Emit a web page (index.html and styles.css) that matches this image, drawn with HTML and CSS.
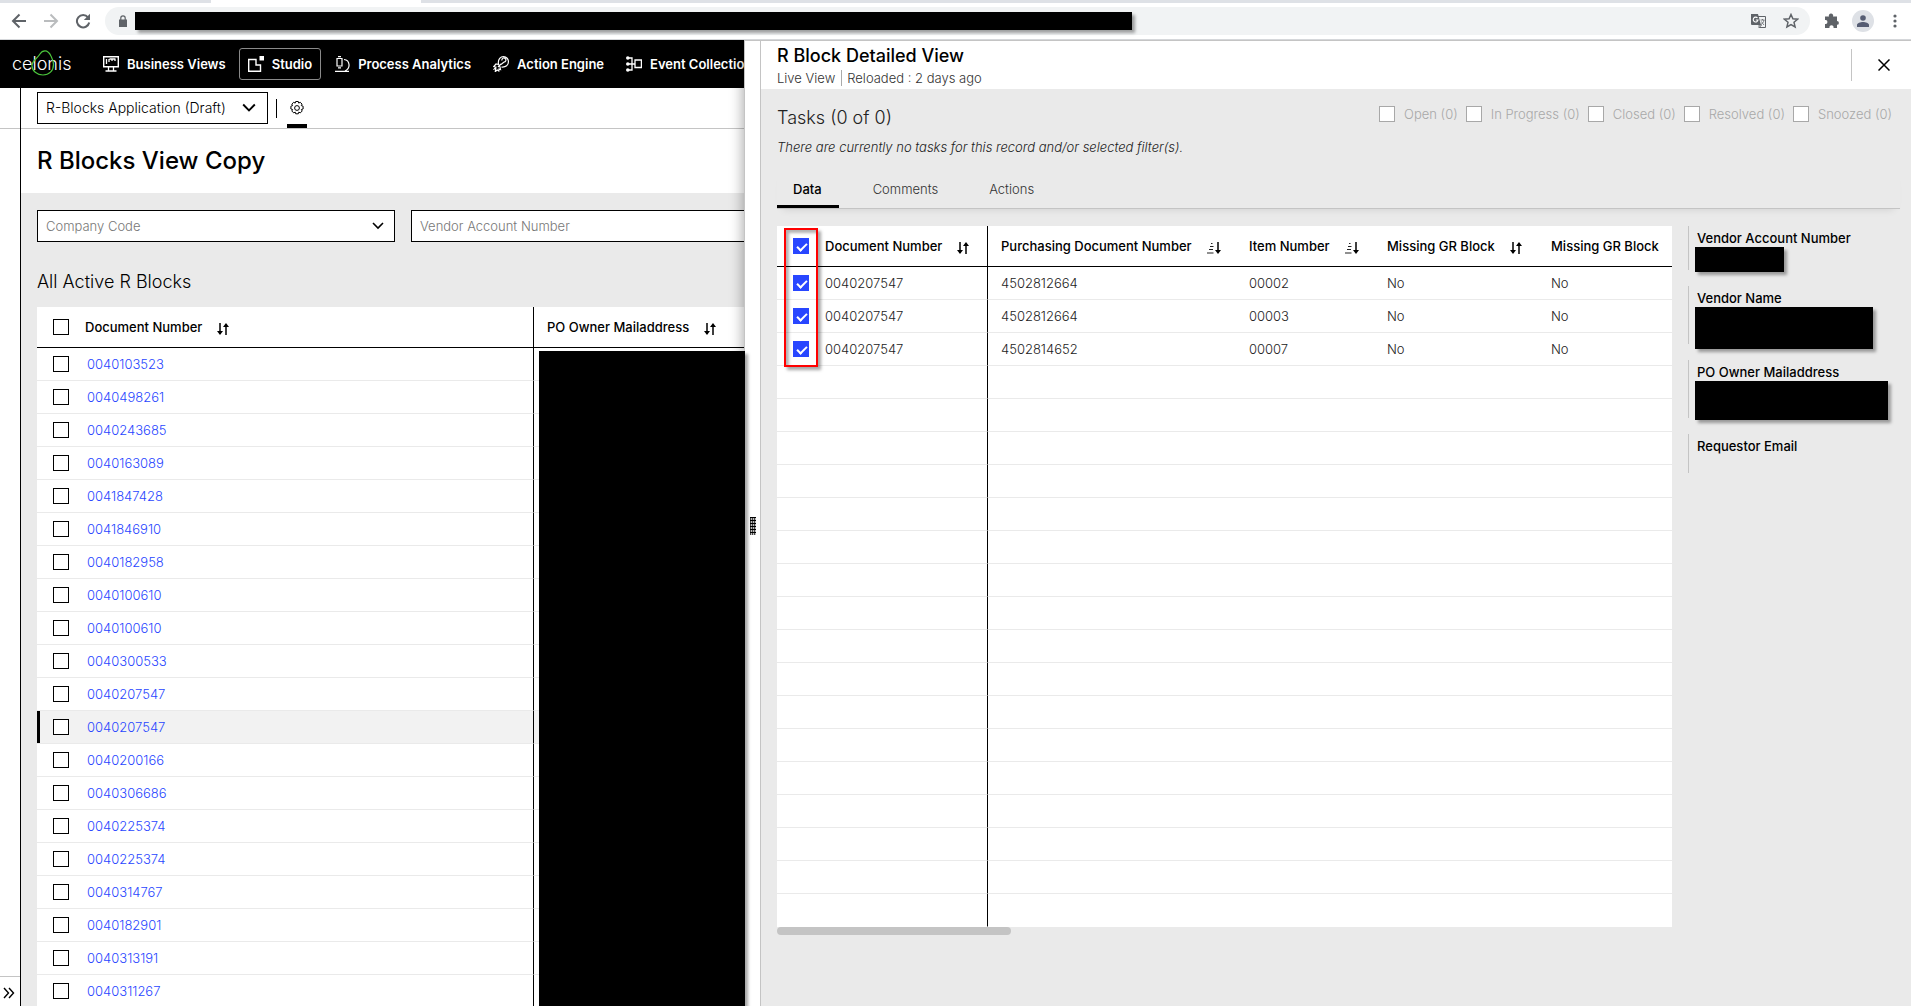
FILE: index.html
```html
<!DOCTYPE html>
<html lang="en">
<head>
<meta charset="utf-8">
<meta name="viewport" content="width=device-width, initial-scale=1">
<title>R Blocks View Copy</title>
<link rel="stylesheet" href="styles.css">
</head>
<body>
<svg class="symbols" aria-hidden="true">
  <symbol id="sort" viewBox="0 0 12 12"><path d="M3 0v11M9 12V1.500" stroke="#000" stroke-width="1.500" fill="none"/><path d="M0 8h6L3 12zM6 4h6L9 0z"/></symbol>
  <symbol id="sorted" viewBox="0 0 14 12"><path d="M4 1.500h1.500M3 4.500h3.500M2 7.500h4M0 11h6.500" stroke="#222" stroke-width="1.200" fill="none"/><path d="M11 0v10" stroke="#000" stroke-width="1.500"/><path d="M8 8h6l-3 4z"/></symbol>
  <symbol id="chevron" viewBox="0 0 12 8"><path d="M1 1l5 5 5-5" fill="none" stroke="#000" stroke-width="1.600"/></symbol>
</svg>
<header class="browser">
  <div class="tabstrip"><i class="active-tab"></i></div>
  <div class="toolbar">
    <button class="tool" aria-label="Back"><svg viewBox="0 0 16 16" width="16" height="16"><path d="M15 8H2M8.500 1.500L2 8l6.500 6.500" fill="none" stroke="#5f6368" stroke-width="2"/></svg></button>
    <button class="tool" aria-label="Forward"><svg viewBox="0 0 16 16" width="16" height="16"><path d="M1 8h13M7.500 1.500L14 8l-6.500 6.500" fill="none" stroke="#babcbe" stroke-width="2"/></svg></button>
    <button class="tool" aria-label="Reload"><svg viewBox="0 0 16 16" width="16" height="16"><path d="M13 4.300A6.200 6.200 0 1 0 14.200 9.500" fill="none" stroke="#5f6368" stroke-width="2"/><path d="M15 .8V7H8.800z" fill="#5f6368"/></svg></button>
    <div class="address">
      <svg viewBox="0 0 8 12" width="8" height="12"><path d="M0 4.500h8V12H0z" fill="#5f6368"/><path d="M1.800 5V3a2.200 2.200 0 0 1 4.400 0v2" fill="none" stroke="#5f6368" stroke-width="1.200"/></svg>
      <span class="redacted url"></span>
      <svg class="translate" viewBox="0 0 16 16" width="16" height="16"><path d="M7 3.500h7.500v11H8.500" fill="none" stroke="#5f6368"/><path d="M0 1h7l3 11H1a1 1 0 0 1-1-1z" fill="#5f6368"/><path d="M6.500 5A2.400 2.400 0 1 0 7 7H4.800" fill="none" stroke="#fff" stroke-width="1.100"/><path d="M9.500 7h4M11.500 6v1M13 7c-.5 2.500-1.500 3.500-3 4.500M10.500 8.500c.8 1.500 1.500 2.500 2.500 3.500M8 12v3l2.500-3z" fill="none" stroke="#5f6368" stroke-width=".8"/></svg>
      <svg viewBox="0 0 16 16" width="16" height="16"><path d="M8 1.500l1.900 4.300 4.700.4-3.600 3.100 1.100 4.600L8 11.500l-4.100 2.400L5 9.300 1.400 6.200l4.700-.4z" fill="none" stroke="#5f6368" stroke-width="1.500"/></svg>
    </div>
    <button class="tool" aria-label="Extensions"><svg viewBox="0 0 16 16" width="16" height="16"><path d="M1 3.500h4a2.200 2.200 0 1 1 4 0h4V8a1.900 1.900 0 1 1 0 3.800V15H9.500a2.100 2.100 0 1 0-4 0H1v-4a2 2 0 1 0 0-3.900z" fill="#5f6368"/></svg></button>
    <button class="avatar" aria-label="Profile"><svg viewBox="0 0 12 12" width="12" height="12"><circle cx="6" cy="3" r="2.800" fill="#565d73"/><path d="M0 12v-2c0-2 3.500-3 6-3s6 1 6 3v2z" fill="#565d73"/></svg></button>
    <button class="tool" aria-label="Menu"><svg viewBox="0 0 16 16" width="16" height="16" fill="#5f6368"><circle cx="8" cy="3" r="1.600"/><circle cx="8" cy="8" r="1.600"/><circle cx="8" cy="13" r="1.600"/></svg></button>
  </div>
</header>
<div class="split">
  <div class="workspace">
    <nav class="nav">
      <a class="logo" href="#"><svg viewBox="0 0 24 26" width="24" height="26"><path d="M9 4C10.500 1.500 12 .8 14 .8c3 0 4.500 2 6 5.200 1.500 3 2.500 5.500 2.500 8.500C22.500 21 18 25 12 25S1 21 1 15.500C1 10.500 6 9 9 4z" fill="none" stroke="#4bc53c" stroke-width="1.200"/></svg><span>celonis</span></a>
      <a class="item" href="#"><svg viewBox="0 0 16 16" width="16" height="16" fill="none" stroke="#fff"><path d="M.7.700h14.600v10H.700z" stroke-width="1.400"/><path d="M3.500 3v5M6 3v3M9 3v2M12 3v2M6.500 3h6" stroke-width="1.300"/><path d="M5.500 11v3.500M10.500 11v3.500M2.500 15h11" stroke-width="1.300"/></svg>Business Views</a>
      <a class="item current" href="#"><svg viewBox="0 0 16 16" width="16" height="16"><path d="M8 3.500H.7v11.800h11.800V9H8z" fill="none" stroke="#fff" stroke-width="1.400"/><path d="M11.500 0H16v4.500h-4.500z" fill="#fff"/></svg>Studio</a>
      <a class="item" href="#"><svg viewBox="0 0 16 16" width="16" height="16" fill="none" stroke="#fff" stroke-width="1.200"><path d="M3 2.500h5v7.500H3zM4 .6h3M4 11.800h3M1 15.400h14M10 3.500c6 .5 7 9 1 11.500"/></svg>Process Analytics</a>
      <a class="item" href="#"><svg viewBox="0 0 16 16" width="16" height="16" fill="none" stroke="#fff" stroke-width="1.200"><path d="M5.500 8.500C4.500 2.500 8 .6 10.500.6A5 5 0 0 1 15.400 6c0 3-2.400 5.500-7 5M8 8.500l3-2.500a2 2 0 1 0-2-1.500M5.500 8.500L3 8 .800 10.500l2 .5-1.500 2 1.500-.5-.5 3 2-1.500 1.500 1 .2-2 1.500.5-.500-2.500zM5 11l3-3"/></svg>Action Engine</a>
      <a class="item" href="#"><svg viewBox="0 0 16 16" width="16" height="16" fill="none" stroke="#fff" stroke-width="1.300"><path d="M9 4h6.400v7.500H9zM3 2h3v12H3M3 8h6"/><circle cx="1.800" cy="2" r="1.800" fill="#fff" stroke="none"/><circle cx="1.800" cy="8" r="1.800" fill="#fff" stroke="none"/><circle cx="1.800" cy="14" r="1.800" fill="#fff" stroke="none"/></svg>Event Collection</a>
    </nav>
    <div class="app">
      <div class="rail"><div class="rail-top"></div><button aria-label="Expand"><svg viewBox="0 0 12 12" width="12" height="12"><path d="M1 1l4.500 5L1 11M6 1l4.500 5L6 11" fill="none" stroke="#000" stroke-width="1.400"/></svg></button></div>
      <main class="main">
        <div class="subbar">
          <button class="app-select">R-Blocks Application (Draft)<svg width="14" height="10"><use href="#chevron"/></svg></button>
          <i class="divider"></i>
          <button class="settings" aria-label="Settings"><svg viewBox="0 0 16 16" width="16" height="16" fill="none" stroke="#000"><circle cx="8" cy="8" r="2.400"/><path d="M6.700 1.500h2.600l.4 1.600 1.500-.8 1.900 1.800-.8 1.500 1.800.6v2.800l-1.700.5.8 1.500-1.900 1.900-1.500-.8-.5 1.700H6.700l-.5-1.700-1.500.8-1.900-1.900.8-1.500-1.700-.5V6.200l1.700-.6-.8-1.500 1.900-1.800 1.500.8z"/></svg></button>
        </div>
        <h1>R Blocks View Copy</h1>
        <div class="board">
          <div class="filters">
            <button class="filter">Company Code<svg width="12" height="8"><use href="#chevron"/></svg></button>
            <button class="filter">Vendor Account Number<svg width="12" height="8"><use href="#chevron"/></svg></button>
          </div>
          <h2>All Active R Blocks</h2>
          <div class="list">
            <table class="grid docs">
              <colgroup><col class="c-check"><col class="c-doc"><col></colgroup>
              <thead><tr><th><input type="checkbox" aria-label="Select all"></th><th class="edge">Document Number<svg width="12" height="12"><use href="#sort"/></svg></th><th class="pad">PO Owner Mailaddress<svg width="12" height="12"><use href="#sort"/></svg></th></tr></thead>
              <tbody>
                <tr><td><input type="checkbox" aria-label="Select row"></td><td class="edge"><a href="#">0040103523</a></td><td></td></tr>
                <tr><td><input type="checkbox" aria-label="Select row"></td><td class="edge"><a href="#">0040498261</a></td><td></td></tr>
                <tr><td><input type="checkbox" aria-label="Select row"></td><td class="edge"><a href="#">0040243685</a></td><td></td></tr>
                <tr><td><input type="checkbox" aria-label="Select row"></td><td class="edge"><a href="#">0040163089</a></td><td></td></tr>
                <tr><td><input type="checkbox" aria-label="Select row"></td><td class="edge"><a href="#">0041847428</a></td><td></td></tr>
                <tr><td><input type="checkbox" aria-label="Select row"></td><td class="edge"><a href="#">0041846910</a></td><td></td></tr>
                <tr><td><input type="checkbox" aria-label="Select row"></td><td class="edge"><a href="#">0040182958</a></td><td></td></tr>
                <tr><td><input type="checkbox" aria-label="Select row"></td><td class="edge"><a href="#">0040100610</a></td><td></td></tr>
                <tr><td><input type="checkbox" aria-label="Select row"></td><td class="edge"><a href="#">0040100610</a></td><td></td></tr>
                <tr><td><input type="checkbox" aria-label="Select row"></td><td class="edge"><a href="#">0040300533</a></td><td></td></tr>
                <tr><td><input type="checkbox" aria-label="Select row"></td><td class="edge"><a href="#">0040207547</a></td><td></td></tr>
                <tr class="selected"><td><input type="checkbox" aria-label="Select row"></td><td class="edge"><a href="#">0040207547</a></td><td></td></tr>
                <tr><td><input type="checkbox" aria-label="Select row"></td><td class="edge"><a href="#">0040200166</a></td><td></td></tr>
                <tr><td><input type="checkbox" aria-label="Select row"></td><td class="edge"><a href="#">0040306686</a></td><td></td></tr>
                <tr><td><input type="checkbox" aria-label="Select row"></td><td class="edge"><a href="#">0040225374</a></td><td></td></tr>
                <tr><td><input type="checkbox" aria-label="Select row"></td><td class="edge"><a href="#">0040225374</a></td><td></td></tr>
                <tr><td><input type="checkbox" aria-label="Select row"></td><td class="edge"><a href="#">0040314767</a></td><td></td></tr>
                <tr><td><input type="checkbox" aria-label="Select row"></td><td class="edge"><a href="#">0040182901</a></td><td></td></tr>
                <tr><td><input type="checkbox" aria-label="Select row"></td><td class="edge"><a href="#">0040313191</a></td><td></td></tr>
                <tr><td><input type="checkbox" aria-label="Select row"></td><td class="edge"><a href="#">0040311267</a></td><td></td></tr>
              </tbody>
            </table>
            <div class="redacted mails"></div>
          </div>
        </div>
      </main>
    </div>
  </div>
  <aside class="drawer">
    <div class="resizer"><i class="grip"></i></div>
    <div class="detail">
      <header class="detail-head">
        <div>
          <h2>R Block Detailed View</h2>
          <p><span>Live View</span><span class="reloaded">Reloaded : 2 days ago</span></p>
        </div>
        <button class="close" aria-label="Close"><svg viewBox="0 0 12 12" width="12" height="12"><path d="M.500.500l11 11M11.500.500l-11 11" stroke="#000" stroke-width="1.500"/></svg></button>
      </header>
      <div class="detail-body">
        <div class="tasks">
          <h3>Tasks (0 of 0)</h3>
          <div class="states">
            <label><input type="checkbox">Open (0)</label>
            <label><input type="checkbox">In Progress (0)</label>
            <label><input type="checkbox">Closed (0)</label>
            <label><input type="checkbox">Resolved (0)</label>
            <label><input type="checkbox">Snoozed (0)</label>
          </div>
        </div>
        <p class="empty">There are currently no tasks for this record and/or selected filter(s).</p>
        <div class="tabs" role="tablist">
          <button role="tab" aria-selected="true">Data</button>
          <button role="tab" aria-selected="false">Comments</button>
          <button role="tab" aria-selected="false">Actions</button>
        </div>
        <div class="columns">
          <div class="records">
            <table class="grid">
              <colgroup><col class="c-check"><col class="c-d1"><col class="c-d2"><col class="c-d3"><col class="c-d4"><col></colgroup>
              <thead><tr><th><input type="checkbox" checked aria-label="Select all"></th><th class="edge">Document Number<svg width="12" height="12"><use href="#sort"/></svg></th><th class="pad">Purchasing Document Number<svg width="14" height="12"><use href="#sorted"/></svg></th><th class="pad">Item Number<svg width="14" height="12"><use href="#sorted"/></svg></th><th class="pad">Missing GR Block<svg width="12" height="12"><use href="#sort"/></svg></th><th class="pad">Missing GR Block</th></tr></thead>
              <tbody>
                <tr><td><input type="checkbox" checked aria-label="Select row"></td><td class="edge">0040207547</td><td class="pad">4502812664</td><td class="pad">00002</td><td class="pad">No</td><td class="pad">No</td></tr>
                <tr><td><input type="checkbox" checked aria-label="Select row"></td><td class="edge">0040207547</td><td class="pad">4502812664</td><td class="pad">00003</td><td class="pad">No</td><td class="pad">No</td></tr>
                <tr><td><input type="checkbox" checked aria-label="Select row"></td><td class="edge">0040207547</td><td class="pad">4502814652</td><td class="pad">00007</td><td class="pad">No</td><td class="pad">No</td></tr>
                <tr><td></td><td class="edge"></td><td colspan="4"></td></tr>
                <tr><td></td><td class="edge"></td><td colspan="4"></td></tr>
                <tr><td></td><td class="edge"></td><td colspan="4"></td></tr>
                <tr><td></td><td class="edge"></td><td colspan="4"></td></tr>
                <tr><td></td><td class="edge"></td><td colspan="4"></td></tr>
                <tr><td></td><td class="edge"></td><td colspan="4"></td></tr>
                <tr><td></td><td class="edge"></td><td colspan="4"></td></tr>
                <tr><td></td><td class="edge"></td><td colspan="4"></td></tr>
                <tr><td></td><td class="edge"></td><td colspan="4"></td></tr>
                <tr><td></td><td class="edge"></td><td colspan="4"></td></tr>
                <tr><td></td><td class="edge"></td><td colspan="4"></td></tr>
                <tr><td></td><td class="edge"></td><td colspan="4"></td></tr>
                <tr><td></td><td class="edge"></td><td colspan="4"></td></tr>
                <tr><td></td><td class="edge"></td><td colspan="4"></td></tr>
                <tr><td></td><td class="edge"></td><td colspan="4"></td></tr>
                <tr><td></td><td class="edge"></td><td colspan="4"></td></tr>
                <tr><td></td><td class="edge"></td><td colspan="4"></td></tr>
              </tbody>
            </table>
            <div class="scroll-thumb"></div>
            <div class="marker"></div>
          </div>
          <dl class="facts">
            <div class="fact short"><dt>Vendor Account Number</dt><dd class="redacted account"></dd></div>
            <div class="fact"><dt>Vendor Name</dt><dd class="redacted vendor"></dd></div>
            <div class="fact"><dt>PO Owner Mailaddress</dt><dd class="redacted owner"></dd></div>
            <div class="fact none"><dt>Requestor Email</dt><dd></dd></div>
          </dl>
        </div>
      </div>
    </div>
  </aside>
</div>
</body>
</html>
```
FILE: styles.css
```css
* { box-sizing: border-box; margin: 0; padding: 0; }
body {
  height: 100vh;
  display: flex;
  flex-direction: column;
  overflow: hidden;
  font: 300 13px/16px Inter, "Liberation Sans", sans-serif;
  color: #000;
  background: #fff;
}
button { font: inherit; color: inherit; background: none; border: 0; }
a { color: inherit; text-decoration: none; }
svg { flex: none; display: block; }
.symbols { position: absolute; width: 0; height: 0; }
.redacted { background: #000; box-shadow: 3px 3px 3px rgba(0, 0, 0, .35); }

/* Browser bar */
.browser { flex: none; border-bottom: 1px solid #d5d7da; }
.tabstrip { height: 3px; background: #dee1e6; }
.active-tab { display: block; width: 210px; height: 3px; margin-left: 211px; background: #fff; }
.toolbar { height: 36px; display: flex; align-items: center; padding: 0 8px 0 11px; }
.tool { width: 16px; height: 16px; margin-right: 16px; }
.tool:last-child { margin: 0 0 0 13px; }
.address {
  flex: 1;
  height: 28px;
  display: flex;
  align-items: center;
  gap: 16px;
  margin: 0 14px 0 -2px;
  padding: 0 11px 0 14px;
  border-radius: 14px;
  background: #f1f3f4;
}
.url { width: 997px; height: 18px; margin-left: -8px; }
.translate { margin-left: auto; }
.avatar { width: 22px; height: 22px; margin-left: -4px; border-radius: 50%; background: #dee1e6; display: grid; place-items: center; }

/* Split view */
.split { flex: 1; min-height: 0; display: flex; }
.workspace { flex: 0 0 744px; min-width: 0; display: flex; flex-direction: column; }
.nav { flex: none; height: 48px; display: flex; align-items: center; padding-left: 12px; overflow: hidden; background: #000; color: #fff; font-weight: 600; white-space: nowrap; }
.logo { position: relative; flex: none; width: 82px; font-size: 18px; line-height: 24px; font-weight: 300; }
.logo svg { position: absolute; left: 19px; top: -2px; }
.item { flex: none; height: 32px; display: flex; align-items: center; gap: 8px; padding: 0 8px; border: 1px solid transparent; margin-right: 4px; }
.current { border-color: #8a8a8a; border-radius: 3px; }

.app { flex: 1; min-height: 0; display: flex; }
.rail { flex: none; width: 21px; display: flex; flex-direction: column; border-right: 1px solid #000; }
.rail-top { height: 41px; border-bottom: 1px solid #c4c4c4; }
.rail button { height: 30px; margin-top: auto; padding: 3px 0 0 3px; border-top: 1px solid #c4c4c4; }
.main { flex: 1; min-width: 0; display: flex; flex-direction: column; }
.subbar { flex: none; height: 41px; display: flex; align-items: center; padding-left: 16px; border-bottom: 1px solid #c4c4c4; }
.app-select { width: 231px; height: 32px; display: flex; align-items: center; justify-content: space-between; padding: 0 11px 0 8px; border: 1px solid #000; font-size: 14px; }
.divider { width: 1px; height: 19px; margin: 0 10px 0 8px; background: #000; }
.settings { width: 20px; height: 40px; padding: 4px 2px 0; border-bottom: 4px solid #000; }
h1 { flex: none; padding: 16px; font-size: 24px; line-height: 32px; font-weight: 500; }
.board { flex: 1; min-height: 0; padding: 17px 0 0 16px; background: #eaeaea; display: flex; flex-direction: column; }
.filters { flex: none; display: flex; gap: 16px; overflow: hidden; }
.filter { flex: 0 0 358px; height: 32px; display: flex; align-items: center; justify-content: space-between; padding: 0 10px 0 8px; border: 1px solid #000; background: #fff; color: #777; }
.board h2 { flex: none; padding: 28px 0 13px; font-size: 18px; line-height: 24px; font-weight: 300; }
.list { position: relative; flex: 1; min-height: 0; display: flex; }
.docs { flex: none; }
.mails { position: absolute; z-index: 3; left: 502px; right: -1px; top: 44px; bottom: 0; }

/* Tables */
.grid { width: 100%; table-layout: fixed; border-spacing: 0; background: #fff; text-align: left; white-space: nowrap; }
.docs { height: max-content; }
.c-check { width: 48px; }
.c-doc { width: 449px; }
.c-d1 { width: 163px; }
.c-d2 { width: 248px; }
.c-d3 { width: 138px; }
.c-d4 { width: 164px; }
th { height: 41px; border-bottom: 1px solid #000; font-weight: 500; }
td { height: 33px; border-bottom: 1px solid #eaeaea; }
th svg { display: inline-block; margin-left: 15px; vertical-align: -3px; }
.edge { border-right: 1px solid #000; }
.pad { padding-left: 13px; }
td a { padding-left: 2px; color: #2846ff; }
.selected td { background: #f2f2f2; }
.selected td:first-child { box-shadow: inset 3px 0 #000; }
input[type="checkbox"] { appearance: none; flex: none; display: block; width: 16px; height: 16px; border: 1px solid #000; background: #fff; }
.grid input { margin-left: 16px; }
input[type="checkbox"]:checked { border: 0; padding: 5px 4px; background: #2846ff; }
input[type="checkbox"]:checked::after { content: ""; display: block; width: 8px; height: 4px; border: solid #fff; border-width: 0 0 2px 2px; transform: rotate(-45deg); }

/* Detail drawer */
.drawer { position: relative; z-index: 2; flex: 1; min-width: 0; display: flex; background: #fff; border: solid #c4c4c4; border-width: 1px 0 0 1px; box-shadow: -2px 0 12px rgba(0, 0, 0, .3); clip-path: inset(0 0 0 -20px); }
.resizer { flex: none; width: 15px; padding-top: 5px; display: grid; place-items: center; }
.grip { width: 6px; height: 18px; background: repeating-linear-gradient(#000 0 1px, transparent 1px 3px), repeating-linear-gradient(90deg, #444 0 1px, #bbb 1px 2px); }
.detail { flex: 1; min-width: 0; display: flex; flex-direction: column; border-left: 1px solid #c4c4c4; }
.detail-head { height: 48px; display: flex; justify-content: space-between; align-items: center; padding: 0 0 0 16px; }
.detail-head h2 { font-size: 18px; line-height: 22px; font-weight: 500; }
.detail-head p { margin-top: 3px; color: #333; }
.reloaded { margin-left: 6px; padding-left: 5px; border-left: 1px solid #aaa; }
.close { height: 32px; padding: 0 21px 0 26px; border-left: 1px solid #c4c4c4; }
.detail-body { flex: 1; padding: 17px 11px 0 16px; background: #eaeaea; }
.tasks { display: flex; justify-content: space-between; }
.tasks h3 { font-size: 18px; line-height: 24px; font-weight: 300; color: #222; }
.states { display: flex; gap: 8px; padding-right: 8px; color: #a8a8a8; }
.states label { height: 16px; display: flex; align-items: center; gap: 9px; }
.states input[type="checkbox"] { border-color: #a8a8a8; }
.empty { padding-top: 9px; font-style: italic; color: #222; }
.tabs { display: flex; height: 40px; margin: 14px 0 17px; border-bottom: 1px solid #c4c4c4; box-shadow: 0 6px 8px -6px rgba(0, 0, 0, .12); color: #333; }
.tabs button { height: 39px; padding: 3px 17px 0 16px; margin-right: 18px; border-bottom: 3px solid transparent; }
.tabs [aria-selected="true"] { border-color: #000; font-weight: 500; color: #000; }
.columns { display: flex; gap: 16px; }
.records { position: relative; flex: 1; min-width: 0; }
.records td { color: #222; }
.records tbody tr:last-child td { border-bottom-color: #fff; }
.scroll-thumb { width: 234px; height: 8px; border-radius: 4px; background: #c4c4c4; }
.marker { position: absolute; left: 7px; top: 2px; width: 34px; height: 139px; border: 2px solid #f00; box-shadow: 3px 3px 3px rgba(0, 0, 0, .35), inset 3px 3px 3px rgba(0, 0, 0, .3); }
.facts { flex: 0 0 212px; }
.fact { height: 58px; margin-bottom: 16px; padding: 4px 0 0 6px; border-left: 1px solid #c4c4c4; }
.fact dt { padding-left: 2px; line-height: 17px; font-weight: 500; color: #000; }
.short { height: 44px; }
.none { height: 39px; }
.account { width: 89px; height: 25px; }
.vendor { width: 178px; height: 42px; }
.owner { width: 193px; height: 39px; }
```
